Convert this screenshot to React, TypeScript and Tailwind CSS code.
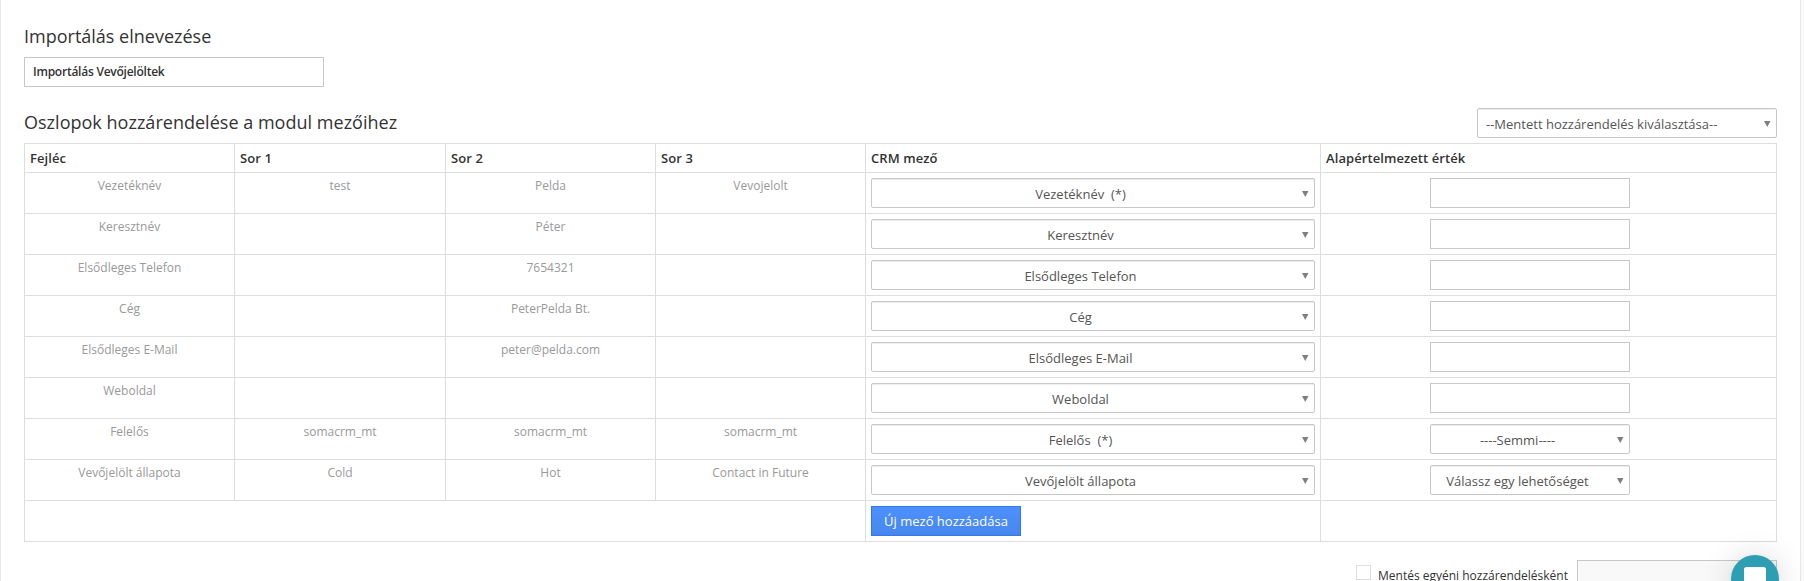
import clsx from "clsx";

type Row = {
  header: string;
  values: string[];
  field: string;
  select?: string;
};

const columns = ["Fejléc", "Sor 1", "Sor 2", "Sor 3", "CRM mező", "Alapértelmezett érték"];

const rows: Row[] = [
  { header: "Vezetéknév", values: ["test", "Pelda", "Vevojelolt"], field: "Vezetéknév\u00a0 (*)" },
  { header: "Keresztnév", values: ["", "Péter", ""], field: "Keresztnév" },
  { header: "Elsődleges Telefon", values: ["", "7654321", ""], field: "Elsődleges Telefon" },
  { header: "Cég", values: ["", "PeterPelda Bt.", ""], field: "Cég" },
  { header: "Elsődleges E-Mail", values: ["", "peter@pelda.com", ""], field: "Elsődleges E-Mail" },
  { header: "Weboldal", values: ["", "", ""], field: "Weboldal" },
  {
    header: "Felelős",
    values: ["somacrm_mt", "somacrm_mt", "somacrm_mt"],
    field: "Felelős\u00a0 (*)",
    select: "----Semmi----",
  },
  {
    header: "Vevőjelölt állapota",
    values: ["Cold", "Hot", "Contact in Future"],
    field: "Vevőjelölt állapota",
    select: "Válassz egy lehetőséget",
  },
];

const SelectBox: React.FC<{
  children: React.ReactNode;
  className?: string;
}> = ({ children, className }) => {
  return (
    <button
      className={clsx(
        "flex h-[30px] items-center rounded-[2px] border border-[#c8c8c8] bg-white pl-2 pr-[5px] text-[13px] leading-[26px] text-[#555] shadow-[inset_0_1px_0_#eee]",
        className
      )}
    >
      <span className="flex-1 pt-[2px] pr-[20px] whitespace-pre">{children}</span>
      <svg width="8" height="6" viewBox="0 0 8 6" className="mt-[2px] shrink-0">
        <path d="M1 0h6.500L4.250 6z" fill="#808080" />
      </svg>
    </button>
  );
};

const cell = "border border-[#ddd] p-[5px] align-top";

const App = () => {
  return (
    <div className="h-[581px] overflow-hidden bg-[#f9f9f9] pr-[3px] font-['Open_Sans','Noto_Sans',sans-serif] text-[#333]">
      <div className="h-full border-x border-[#e8e8e8] bg-white pl-[23px] pr-[23px] pt-[24px]">
        <h4 className="h-[33px] text-[18px] leading-[25px]">Importálás elnevezése</h4>
        <input
          className="block h-[30px] w-[300px] border border-[#c8c8c8] px-2 pb-[2px] text-[12px] font-semibold tracking-[-0.24px] text-[#333]"
          defaultValue="Importálás Vevőjelöltek"
        />
        <div className="mt-[21px] flex h-[35px] justify-between">
          <h4 className="pt-[2px] text-[18px] leading-[25px] tracking-[0.02px]">
            Oszlopok hozzárendelése a modul mezőihez
          </h4>
          <SelectBox className="w-[300px] text-left">--Mentett hozzárendelés kiválasztása--</SelectBox>
        </div>
        <table className="w-[1753px] table-fixed border-collapse">
          <colgroup>
            <col className="w-[210px]" />
            <col className="w-[211px]" />
            <col className="w-[210px]" />
            <col className="w-[210px]" />
            <col className="w-[455px]" />
            <col className="w-[456px]" />
          </colgroup>
          <thead>
            <tr className="h-[29px]">
              {columns.map((column) => (
                <th
                  key={column}
                  className="border border-[#ddd] px-[5px] py-0 text-left text-[13px] leading-[28px] font-semibold tracking-[0.08px]"
                >
                  {column}
                </th>
              ))}
            </tr>
          </thead>
          <tbody className="text-center text-[12px] leading-[16px] text-[#999]">
            {rows.map((row) => (
              <tr key={row.header} className="h-[41px]">
                <td className={cell}>{row.header}</td>
                {row.values.map((value, i) => (
                  <td key={i} className={cell}>
                    {value}
                  </td>
                ))}
                <td className={cell}>
                  <SelectBox className="w-[444px]">{row.field}</SelectBox>
                </td>
                <td className="border border-[#ddd] py-[5px] pl-[109px] align-top">
                  {row.select ? (
                    <SelectBox className="w-[200px]">{row.select}</SelectBox>
                  ) : (
                    <input className="block h-[30px] w-[200px] border border-[#c8c8c8]" />
                  )}
                </td>
              </tr>
            ))}
            <tr className="h-[41px]">
              <td colSpan={4} className={cell} />
              <td className={cell}>
                <button className="block h-[30px] w-[150px] border border-[#3079ed] bg-linear-to-b from-[#4d90fe] to-[#4787ed] text-[13px] leading-[28px] font-medium text-white">
                  Új mező hozzáadása
                </button>
              </td>
              <td className={cell} />
            </tr>
          </tbody>
        </table>
        <div className="mt-[18px] flex h-[21px] justify-end">
          <div className="mt-[5px] size-[15px] shrink-0 border border-[#ddd]" />
          <span className="ml-[7px] pt-[8px] text-[12px] leading-[16px] whitespace-nowrap">
            Mentés egyéni hozzárendelésként
          </span>
          <div className="ml-[9px] h-[30px] w-[200px] shrink-0 border border-[#c8c8c8] bg-[#f9f9f9]" />
        </div>
      </div>
      {/* chat launcher */}
      <button className="fixed top-[555px] left-[1731px] flex size-[48px] justify-center rounded-full bg-[#2e9fb3] shadow-[0_1px_6px_rgba(0,0,0,0.06),0_2px_32px_rgba(0,0,0,0.16)]">
        <svg width="22" height="26" viewBox="0 0 22 26" className="mt-3">
          <path d="M2.5 0h17A2.5 2.5 0 0 1 22 2.5V26l-5-4H2.5A2.5 2.5 0 0 1 0 19.5V2.5A2.5 2.5 0 0 1 2.5 0z" fill="#fff" />
        </svg>
      </button>
    </div>
  );
};

export default App;
